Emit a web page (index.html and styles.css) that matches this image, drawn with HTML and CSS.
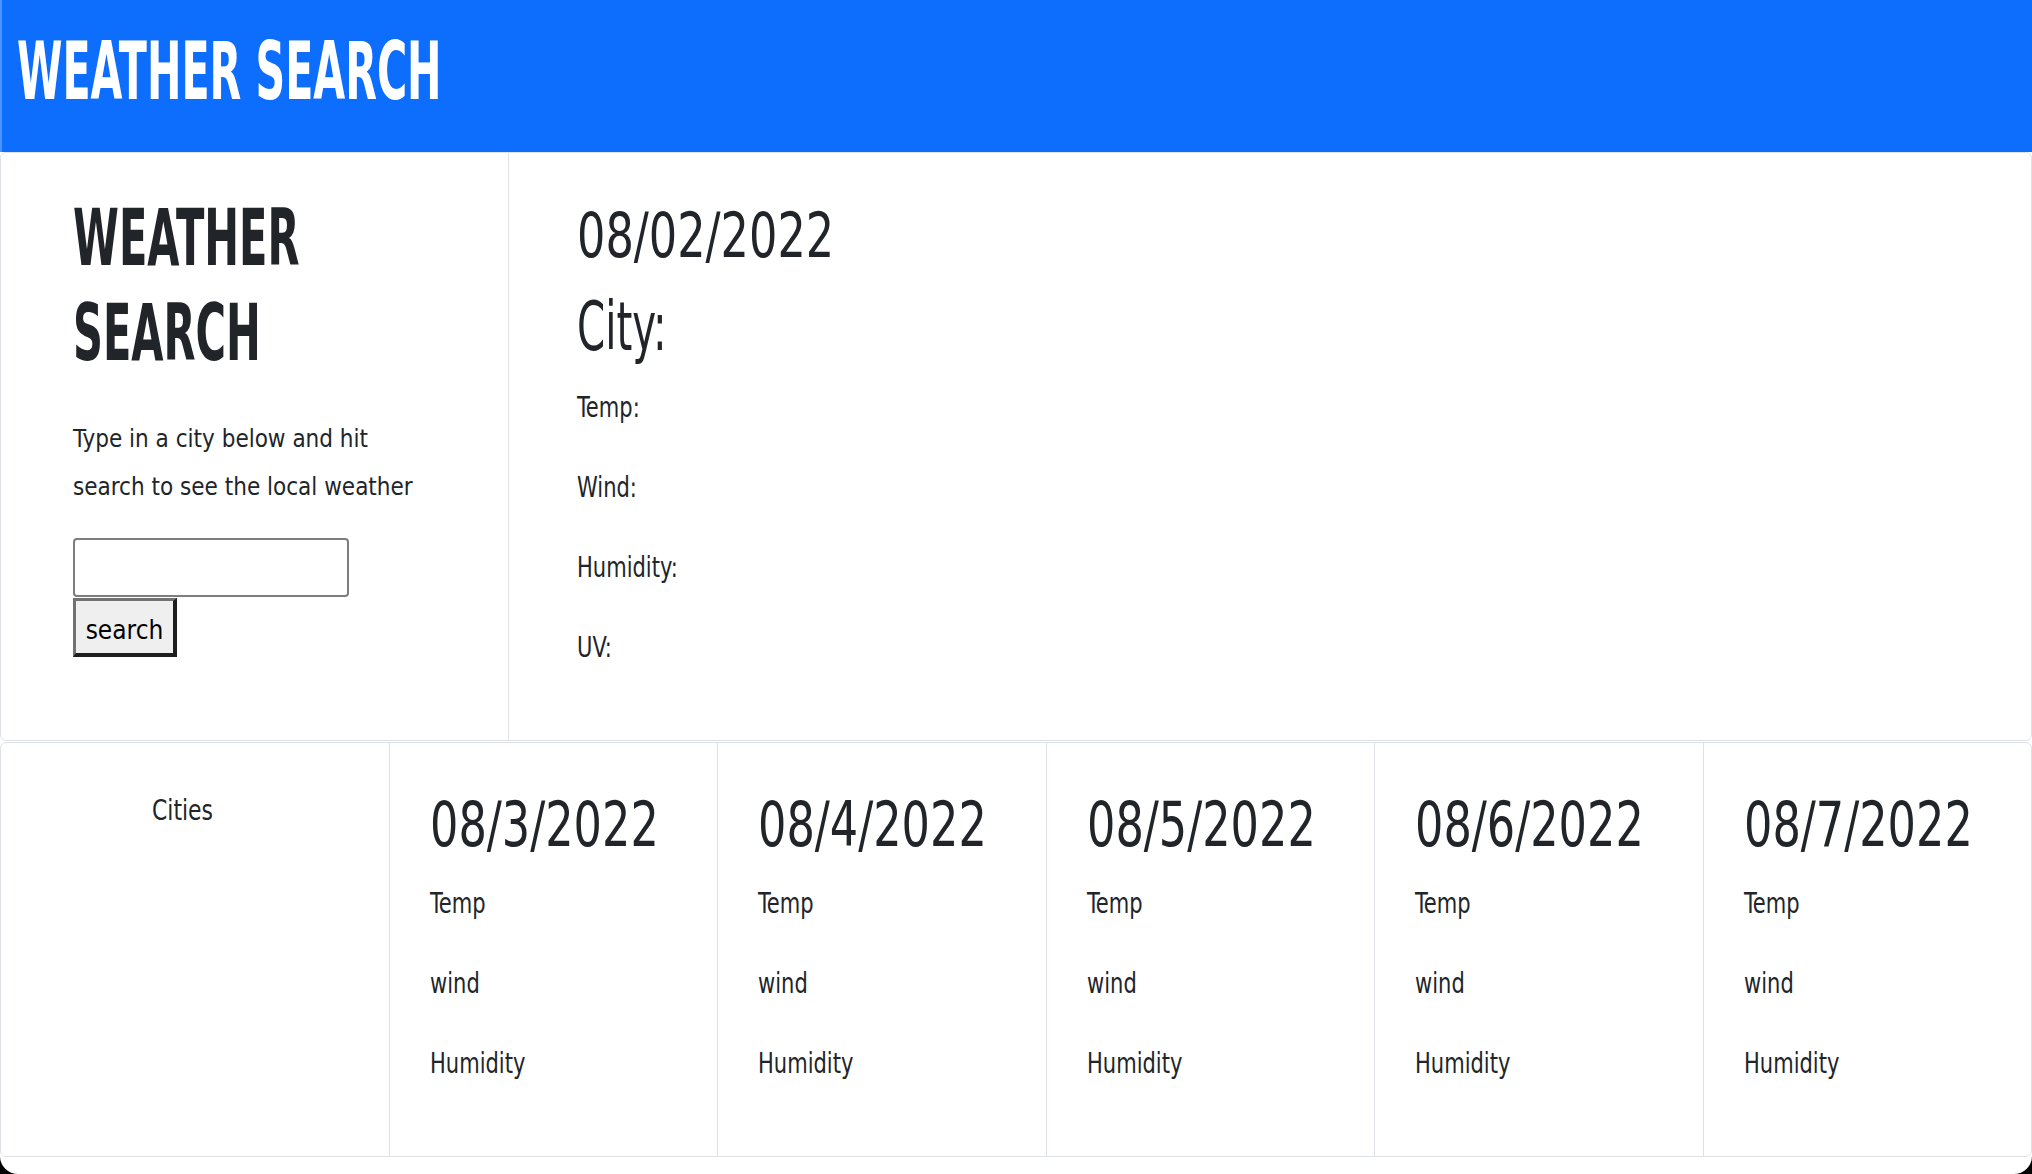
FILE: index.html
```html
<!DOCTYPE html>
<html lang="en">
<head>
<meta charset="utf-8">
<title>Weather Search</title>
<link rel="stylesheet" href="styles.css">
</head>
<body>
<header class="topbar">
  <h1 class="brand">WEATHER SEARCH</h1>
</header>
<main class="page">
  <section class="card current">
    <div class="search-col">
      <h2 class="search-title">WEATHER SEARCH</h2>
      <p class="intro">Type in a city below and hit search to see the local weather</p>
      <input class="city-input" type="text" aria-label="City">
      <button class="search-btn" type="button">search</button>
    </div>
    <div class="today-col">
      <h2 class="today-date">08/02/2022</h2>
      <h3 class="today-city">City:</h3>
      <p class="stat">Temp:</p>
      <p class="stat">Wind:</p>
      <p class="stat">Humidity:</p>
      <p class="stat">UV:</p>
    </div>
  </section>
  <section class="card forecast">
    <div class="cities">Cities</div>
    <div class="day">
      <h3 class="day-date">08/3/2022</h3>
      <p class="stat">Temp</p>
      <p class="stat">wind</p>
      <p class="stat">Humidity</p>
    </div>
    <div class="day">
      <h3 class="day-date">08/4/2022</h3>
      <p class="stat">Temp</p>
      <p class="stat">wind</p>
      <p class="stat">Humidity</p>
    </div>
    <div class="day">
      <h3 class="day-date">08/5/2022</h3>
      <p class="stat">Temp</p>
      <p class="stat">wind</p>
      <p class="stat">Humidity</p>
    </div>
    <div class="day">
      <h3 class="day-date">08/6/2022</h3>
      <p class="stat">Temp</p>
      <p class="stat">wind</p>
      <p class="stat">Humidity</p>
    </div>
    <div class="day">
      <h3 class="day-date">08/7/2022</h3>
      <p class="stat">Temp</p>
      <p class="stat">wind</p>
      <p class="stat">Humidity</p>
    </div>
  </section>
</main>
</body>
</html>
```
FILE: styles.css
```css
html {
  background: #000;
}
body {
  margin: 0;
  min-height: 100vh;
  background: #fff;
  border-radius: 0 0 18px 18px;
  color: #212529;
  font-family: "DejaVu Sans", "Liberation Sans", sans-serif;
  font-stretch: condensed;
  overflow: hidden;
}
.topbar {
  background: #0d6efd;
  height: 152px;
  box-sizing: border-box;
  padding: 22px 0 0 15px;
  border-left: 2px solid #4b93fd;
}
.brand {
  margin: 0;
  color: #fff;
  font-size: 80px;
  line-height: 100px;
  font-weight: 700;
  transform: scaleX(0.572);
  transform-origin: left center;
  white-space: nowrap;
}
.card {
  background: #fff;
  border: 1px solid #dee2e6;
  border-radius: 6px;
}
.current {
  display: grid;
  grid-template-columns: 25% minmax(0, 1fr);
  height: 589px;
  box-sizing: border-box;
}
.search-col {
  border-right: 1px solid #dee2e6;
  padding: 38px 70px 0 72px;
}
.search-title {
  margin: 0;
  font-size: 79px;
  line-height: 95px;
  font-weight: 700;
  transform: scaleX(0.585);
  transform-origin: left top;
}
.intro {
  margin: 34px 0 0;
  font-size: 24px;
  line-height: 48px;
}
.city-input {
  display: block;
  margin: 27px 0 0;
  width: 276px;
  height: 59px;
  box-sizing: border-box;
  border: 2px solid #7d7d7d;
  border-radius: 4px;
  background: #fff;
  font-family: inherit;
  font-size: 24px;
  padding: 0 8px;
}
.search-btn {
  display: block;
  margin: 1px 0 0;
  width: 104px;
  height: 59px;
  box-sizing: border-box;
  background: #efefef;
  border-style: solid;
  border-width: 3px 4px 4px 3px;
  border-color: #727272 #1e1e1e #1e1e1e #727272;
  border-radius: 0;
  padding: 6px 0 0;
  color: #000;
  font-family: inherit;
  font-stretch: condensed;
  font-size: 26px;
  line-height: 46px;
}
.today-col {
  padding: 48px 0 0 68px;
}
.today-date,
.day-date {
  margin: 0;
  font-size: 62px;
  line-height: 70px;
  font-weight: 400;
  white-space: nowrap;
  transform: scaleX(0.8);
  transform-origin: left center;
}
.today-city {
  margin: 18px 0 0;
  font-size: 67px;
  line-height: 76px;
  font-weight: 400;
  transform: scaleX(0.67);
  transform-origin: left center;
}
.stat {
  margin: 0 0 40px;
  font-size: 27.5px;
  line-height: 40px;
  transform: scaleX(0.85);
  transform-origin: left center;
}
.today-city + .stat {
  margin-top: 22px;
}
.forecast {
  display: grid;
  grid-template-columns: 388px repeat(5, minmax(0, 1fr));
  height: 415px;
  box-sizing: border-box;
  margin-top: 1px;
}
.cities {
  padding: 47px 0 0 151px;
  font-size: 29px;
  line-height: 40px;
  transform: scaleX(0.84);
  transform-origin: 151px center;
}
.day {
  border-left: 1px solid #dee2e6;
  padding: 47px 0 0 40px;
}
.day-date {
  margin-bottom: 23px;
}
```
